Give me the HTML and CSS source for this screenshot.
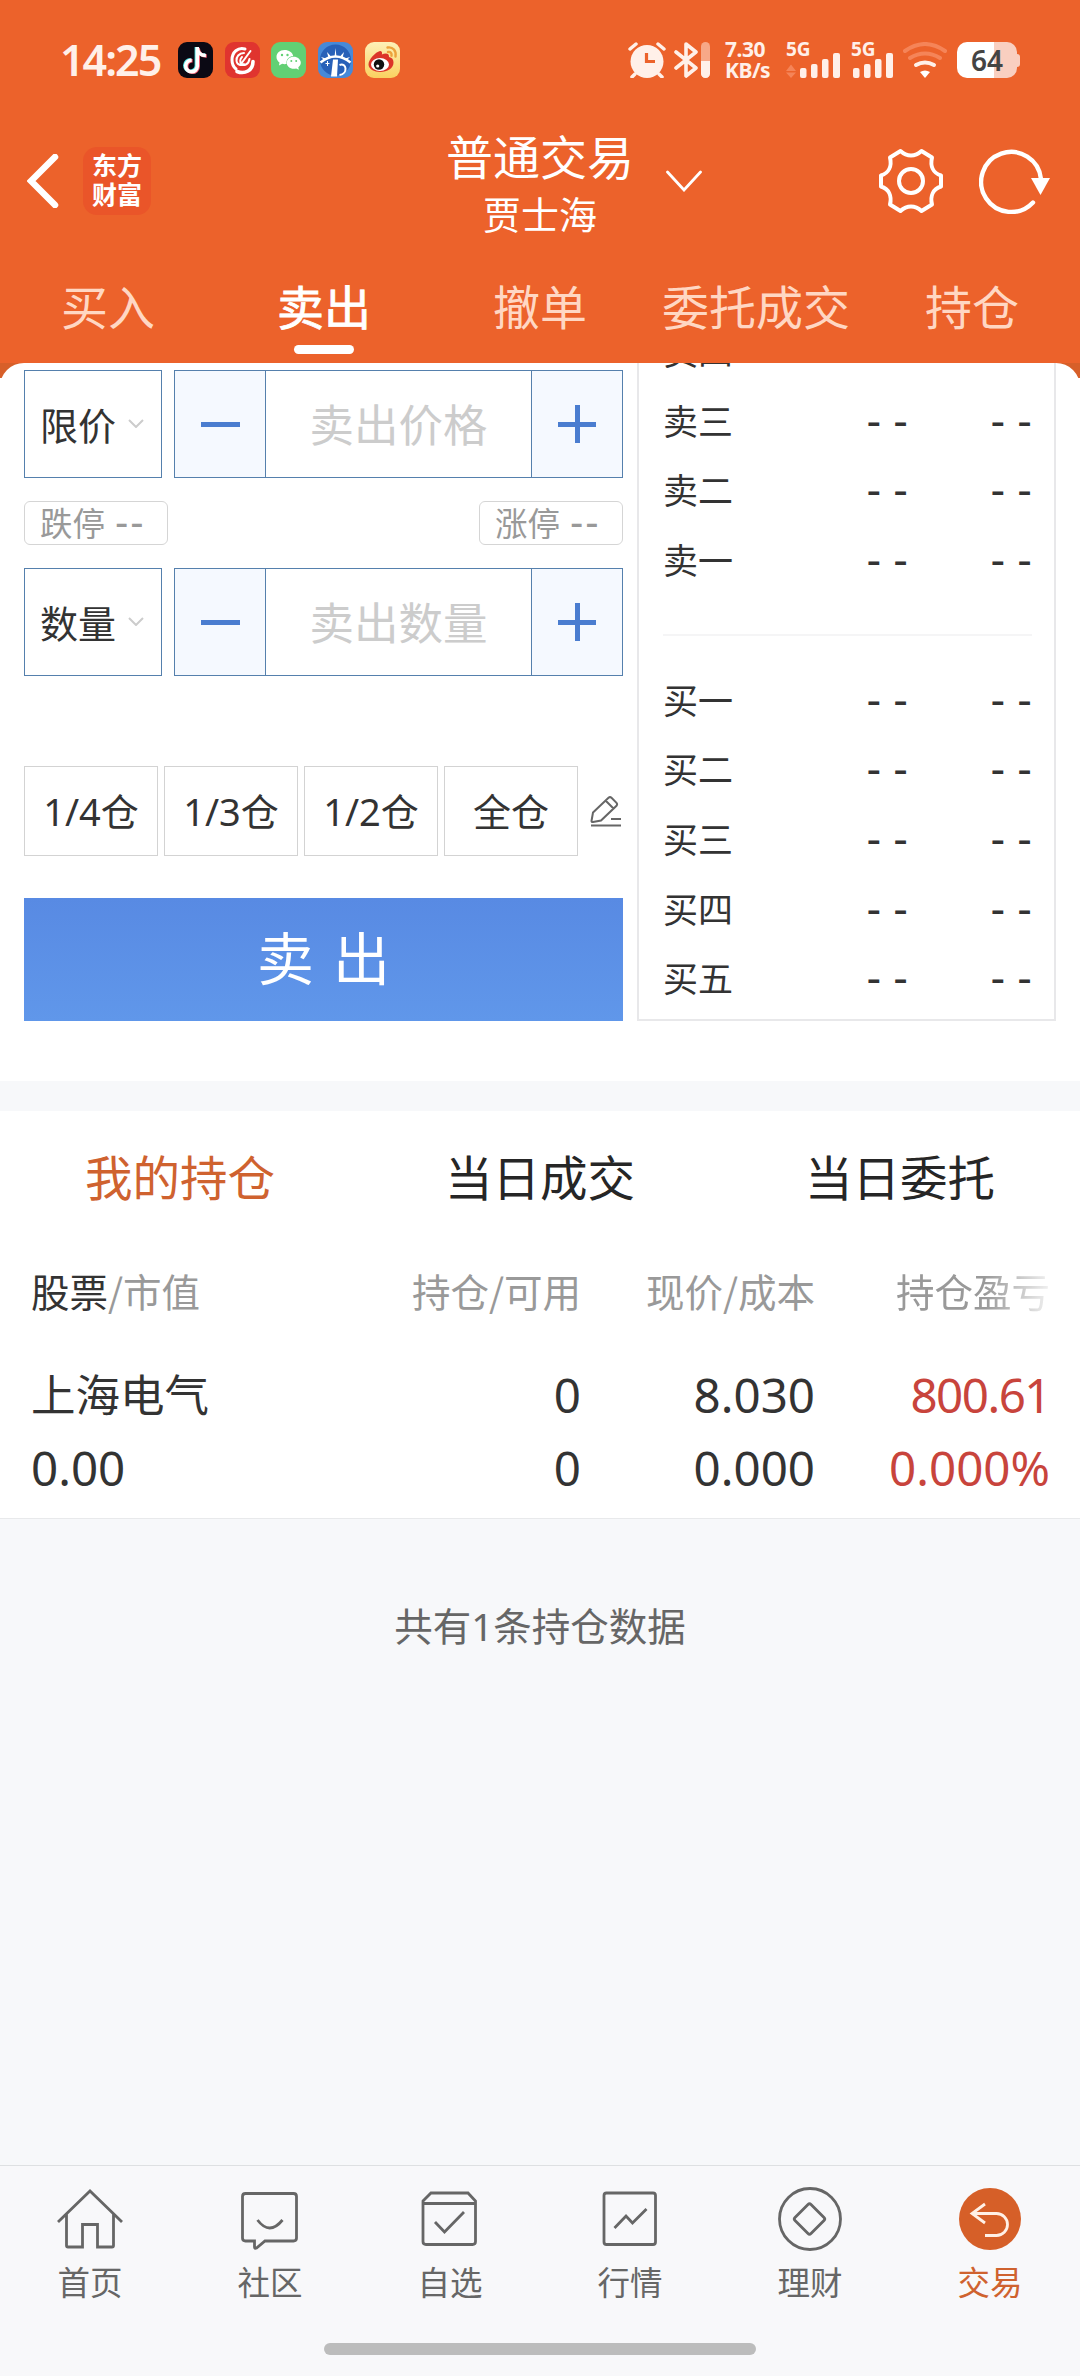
FILE: index.html
```html
<!DOCTYPE html>
<html lang="zh-CN">
<head>
  <meta charset="UTF-8">
  <meta name="viewport" content="width=device-width, initial-scale=1.0">
  <title>普通交易</title>
  <link rel="stylesheet" href="styles.css">
</head>
<body>

  <header class="header">
    <div class="statusbar">
      <span class="time">14:25</span>
      <div class="apps">
        <svg viewBox="0 0 35 36"><rect width="35" height="36" rx="9" fill="#0b0914"/><g fill="none" stroke-width="3.6"><path d="M18.4 5v18.5a5.8 5.8 0 1 1-5.6-5.8M18.4 6c.8 4.500 4 7 8.600 7" stroke="#4fe3e3"/><path d="M20.200 6v18.500a5.800 5.800 0 1 1-5.600-5.800M20.200 7c.8 4.500 4 7 8.600 7" stroke="#f0546c"/><path d="M19.300 5v19a5.800 5.800 0 1 1-5.600-5.800M19.300 6.500c.8 4.500 4 7 8.600 7" stroke="#fff"/></g></svg>
        <svg viewBox="0 0 35 36"><rect width="35" height="36" rx="9" fill="#e0342f"/><g fill="none" stroke="#fff" stroke-linecap="round"><path d="M20 7C13 5 7 10 7 18c0 4 1.500 7 4 9" stroke-width="3"/><path d="M12 29.500c8 3 16-1 16-10" stroke-width="3.600"/><path d="M19 11c-5 0-8 4-7.500 8s5 5 7.500 3M17 15c-2 2-2.500 5-.5 7s7 1 8-5M25.500 9 16 22" stroke-width="2"/></g></svg>
        <svg viewBox="0 0 35 36"><rect width="35" height="36" rx="9" fill="#62d074"/><path d="M13.500 8C8.800 8 5.500 11 5.500 15c0 2.300 1.200 4.200 3 5.500L8 23.500l3.200-1.700c1.500.4 3 .4 4.300.2-.7-4.500 2.600-7.800 6.700-8C21.500 10.500 18 8 13.500 8z" fill="#fff"/><path d="M22.700 14.800c-4 0-7 2.700-7 6s3 6 7 6c.9 0 1.700-.1 2.500-.4l2.600 1.400-.5-2.500c1.500-1.100 2.500-2.700 2.500-4.500 0-3.300-3.200-6-7.100-6z" fill="#fff"/><g fill="#62d074"><circle cx="11" cy="13" r="1.200"/><circle cx="16.500" cy="13" r="1.200"/><circle cx="20.300" cy="19" r="1"/><circle cx="25.200" cy="19" r="1"/></g></svg>
        <svg viewBox="0 0 35 36"><rect width="35" height="36" rx="9" fill="#4789d8"/><circle cx="17.500" cy="18" r="15.500" fill="#2860b8"/><path d="M2.500 20.500Q17.500 8.500 32.500 20.500" fill="none" stroke="#fff" stroke-width="2.400"/><path d="m16.500 15 1-9 1 9M10.500 16 9 10l4.500 5M24.500 16 26 10l-4.500 5M6 18l-3-3 5 1.500M29 18l3-3-5 1.500M15 17.500h5l-1 17h-6z" fill="#fff"/><path d="M21.500 23c7-3 9 8.500 0 10" fill="none" stroke="#fff" stroke-width="2"/><path d="M9.500 19v5M7.500 21.500h4" stroke="#fff"/></svg>
        <svg viewBox="0 0 35 36"><defs><linearGradient id="weibo" x2="0" y2="1"><stop stop-color="#fdf0b8"/><stop offset="1" stop-color="#fad160"/></linearGradient></defs><rect width="35" height="36" rx="9" fill="url(#weibo)"/><path d="M3.500 22.500c0-5 7-12.500 11.500-13.500 2 0 2.500 2 1.800 3.500 3-1.500 7.700-2 7.200 2.500 3 .5 4.500 2.500 4.500 5.500 0 6-6.500 9.500-13 9.500S3.500 27 3.500 22.500z" fill="#dc3429"/><ellipse cx="15" cy="22.500" rx="9" ry="6.500" fill="#fff"/><circle cx="14" cy="22.500" r="5.200" fill="#111"/><circle cx="12.700" cy="24" r="1.600" fill="#fff"/><path d="M22.500 5.500c5.500-1 9 3.500 8 9M23 10c2.500-.5 4 1.300 3.500 3.700" fill="none" stroke="#eca23c" stroke-width="2.400" stroke-linecap="round"/></svg>
      </div>
      <div class="signals">
        <svg class="alarm" viewBox="0 0 38 36"><circle cx="19" cy="19.500" r="16.500" fill="#fff0e9"/><path d="m2 7 6-5M30 2l6 5M7 32l-3 3M31 32l3 3" stroke="#fff0e9" stroke-width="3.500" stroke-linecap="round"/><path d="M18.500 11v8.500H27" fill="none" stroke="#ec622b" stroke-width="3.200"/></svg>
        <svg class="bluetooth" viewBox="0 0 36 36"><path d="m2 10 20 16-10 8V2l10 8L2 26" fill="none" stroke="#fff0e9" stroke-width="3.600" stroke-linejoin="round" stroke-linecap="round"/><rect x="27" width="9" height="36" rx="4.500" fill="#f7a888"/><path d="M27 19h9v12.500a4.500 4.500 0 0 1-9 0z" fill="#fff0e9"/></svg>
        <div class="netspeed"><span>7.30</span><span>KB/s</span></div>
        <div class="cell cell-data">
          <span>5G</span>
          <svg viewBox="0 0 55 36"><path d="m0 29 5-6.500 5 6.500zM0 30.500h10L5 36z" fill="#f58458"/><g fill="#fff0e9"><rect x="14" y="26" width="6.500" height="10" rx="2"/><rect x="25" y="22" width="6.500" height="14" rx="2"/><rect x="36" y="17" width="6.500" height="19" rx="2"/><rect x="47" y="11" width="7" height="25" rx="2"/></g></svg>
        </div>
        <div class="cell">
          <span>5G</span>
          <svg viewBox="0 0 42 36"><g fill="#fff0e9"><rect x="2" y="26" width="6.500" height="10" rx="2"/><rect x="13" y="22" width="6.500" height="14" rx="2"/><rect x="24" y="17" width="6.500" height="19" rx="2"/><rect x="35" y="11" width="7" height="25" rx="2"/></g></svg>
        </div>
        <svg class="wifi" viewBox="0 0 44 36"><g fill="none" stroke-width="4" stroke-linecap="round"><path d="M2 9q20-14 40 0M7 16q15-9 30 0" stroke="#f58458"/><path d="M13 23q9-5 18 0" stroke="#fff0e9"/></g><path d="M17 30q5-3 10 0l-5 6z" fill="#fff"/></svg>
        <div class="battery">64</div>
      </div>
    </div>

    <div class="navbar">
      <div class="nav-left">
        <svg class="back" viewBox="0 0 32 54"><path d="M28 3 4 27l24 24" fill="none" stroke="#fff" stroke-width="6.500" stroke-linecap="round"/></svg>
        <div class="logo">东方<br>财富</div>
      </div>
      <div class="nav-title">
        <h1>普通交易</h1>
        <p>贾士海</p>
      </div>
      <div class="nav-right">
        <svg class="arrow" viewBox="0 0 36 22"><path d="m1.500 2 16.500 18L34.500 2" fill="none" stroke="#fff" stroke-width="2.800" stroke-linecap="round"/></svg>
        <svg class="gear" viewBox="0 0 66 66"><g fill="none" stroke="#fff" stroke-width="4" stroke-linejoin="round"><path d="M22.500 3C29 9 37 9 43.500 3L54 9.500C52 18 55 25 63 27.500V38.500C55 41 52 48 54 56.500L43.500 63C37 57 29 57 22.500 63L12 56.500C14 48 11 41 3 38.500V27.500C11 25 14 18 12 9.500z"/><circle cx="33" cy="33" r="12"/></g></svg>
        <svg class="refresh" viewBox="0 0 72 66"><path d="M54 54.500A30 30 0 1 1 62 31" fill="none" stroke="#fff" stroke-width="4.400" stroke-linecap="round"/><path d="M52 30h19L61.500 47z" fill="#fff"/></svg>
      </div>
    </div>

    <nav class="tabs">
      <span>买入</span>
      <span class="active">卖出</span>
      <span>撤单</span>
      <span>委托成交</span>
      <span>持仓</span>
    </nav>
  </header>

  <div class="sheet">
    <section class="trade">
      <div class="form">
        <div class="field">
          <div class="select">限价<svg viewBox="0 0 16 9"><path d="m1 1 7 7 7-7" fill="none" stroke="#ccc" stroke-width="2"/></svg></div>
          <div class="stepper">
            <span class="step minus"></span>
            <span class="value">卖出价格</span>
            <span class="step plus"></span>
          </div>
        </div>
        <div class="limits">
          <span>跌停<i>--</i></span>
          <span>涨停<i>--</i></span>
        </div>
        <div class="field">
          <div class="select">数量<svg viewBox="0 0 16 9"><path d="m1 1 7 7 7-7" fill="none" stroke="#ccc" stroke-width="2"/></svg></div>
          <div class="stepper">
            <span class="step minus"></span>
            <span class="value">卖出数量</span>
            <span class="step plus"></span>
          </div>
        </div>
        <div class="ratios">
          <span class="ratio">1/4仓</span>
          <span class="ratio">1/3仓</span>
          <span class="ratio">1/2仓</span>
          <span class="ratio">全仓</span>
          <svg class="edit" viewBox="0 0 31 31"><path d="M1 29.500h30M21 23h10M1.500 25 3 16.500 18.500 1.800q1.500-1.300 3 0l5 5q1.200 1.500 0 3L11 24.500 3 26q-1.500.2-1.500-1zM16 5l8 8" fill="none" stroke="#666" stroke-width="2"/></svg>
        </div>
        <div class="sell">卖 出</div>
      </div>

      <div class="book">
        <div class="quote"><span>卖四</span><i>- -</i><i>- -</i></div>
        <div class="quote"><span>卖三</span><i>- -</i><i>- -</i></div>
        <div class="quote"><span>卖二</span><i>- -</i><i>- -</i></div>
        <div class="quote"><span>卖一</span><i>- -</i><i>- -</i></div>
        <div class="divider"></div>
        <div class="quote"><span>买一</span><i>- -</i><i>- -</i></div>
        <div class="quote"><span>买二</span><i>- -</i><i>- -</i></div>
        <div class="quote"><span>买三</span><i>- -</i><i>- -</i></div>
        <div class="quote"><span>买四</span><i>- -</i><i>- -</i></div>
        <div class="quote"><span>买五</span><i>- -</i><i>- -</i></div>
      </div>
    </section>
  </div>

  <section class="holdings">
    <div class="subtabs">
      <span class="active">我的持仓</span>
      <span>当日成交</span>
      <span>当日委托</span>
    </div>
    <div class="row head">
      <span><b>股票</b>/市值</span>
      <span>持仓/可用</span>
      <span>现价/成本</span>
      <span class="fade">持仓盈亏</span>
    </div>
    <div class="row">
      <span class="stock">上海电气</span>
      <span>0</span>
      <span>8.030</span>
      <span class="up profit">800.61</span>
    </div>
    <div class="row">
      <span>0.00</span>
      <span>0</span>
      <span>0.000</span>
      <span class="up">0.000%</span>
    </div>
  </section>

  <p class="summary">共有1条持仓数据</p>

  <footer class="footer">
    <nav class="tabbar">
      <div class="tab">
        <svg viewBox="0 0 66 66"><path d="M1 36 33 5l32 31M9.500 28v31.500q0 1.500 1.500 1.500h14.500V38.500h15V61H55q1.500 0 1.500-1.500V28"/></svg>
        <span>首页</span>
      </div>
      <div class="tab">
        <svg viewBox="0 0 66 66"><path d="M8.500 7.500h48q3 0 3 3V52q0 3-3 3H28l-8.500 7q-2 1-2-1v-6h-9q-3 0-3-3V10.500q0-3 3-3z"/><path d="M20.500 34q12 16 25 0"/></svg>
        <span>社区</span>
      </div>
      <div class="tab">
        <svg viewBox="0 0 66 66"><path d="M6 17.500h52.500M6 15l8-8h37l7.500 8v40.500q0 3-3 3H9q-3 0-3-3zM18 36l9.500 10L47 26"/></svg>
        <span>自选</span>
      </div>
      <div class="tab">
        <svg viewBox="0 0 66 66"><rect x="7" y="7" width="51.500" height="51.500" rx="2.500"/><path d="M17.500 42 29 30l6.500 7 14-14"/></svg>
        <span>行情</span>
      </div>
      <div class="tab">
        <svg viewBox="0 0 66 66"><circle cx="33" cy="33" r="30.500"/><path d="m31 18.500-13 13q-1.500 1.500 0 3l13 13q1.500 1.500 3 0l13-13q1.500-1.500 0-3l-13-13q-1.500-1.500-3 0z"/></svg>
        <span>理财</span>
      </div>
      <div class="tab active">
        <svg viewBox="0 0 66 66"><circle class="disc" cx="33" cy="33" r="31"/><path class="back-arrow" d="M28 18 15 27.500 28 37M15 27.500h24.500a11 11 0 0 1 0 22H28"/></svg>
        <span>交易</span>
      </div>
    </nav>
    <div class="gesture"></div>
  </footer>

</body>
</html>
```

FILE: styles.css
```css
* {
  box-sizing: border-box;
}
body {
  margin: 0;
  width: 1080px;
  height: 2376px;
  display: flex;
  flex-direction: column;
  overflow: hidden;
  background-color: #f7f8fa;
  color: #333;
  font-family: "Noto Sans", "Noto Sans CJK SC", sans-serif;
}
h1, p {
  margin: 0;
  font-weight: normal;
}
i {
  font-style: normal;
  font-family: "Liberation Sans", sans-serif;
}
svg {
  display: block;
  flex-shrink: 0;
}

/* header */
.header {
  height: 363px;
  background-color: #ec622b;
  color: #fff;
}
.statusbar {
  height: 120px;
  padding: 0 63px 0 60px;
  display: flex;
  align-items: center;
  color: #fff0e9;
}
.time {
  width: 118px;
  font-size: 43px;
  font-weight: 600;
  letter-spacing: -2px;
  line-height: 60px;
}
.apps {
  display: flex;
  gap: 11.7px;
}
.apps svg {
  width: 35px;
  height: 36px;
}
.signals {
  display: flex;
  margin-left: auto;
  height: 36px;
}
.alarm {
  width: 38px;
}
.bluetooth {
  width: 36px;
  margin-left: 8px;
}
.netspeed {
  display: flex;
  flex-direction: column;
  width: 46px;
  margin-left: 15px;
  font-size: 21px;
  font-weight: 700;
  line-height: 21px;
  letter-spacing: -0.5px;
  margin-top: -3px;
}
.cell {
  position: relative;
  width: 42px;
  margin-left: 10px;
}
.cell-data {
  width: 55px;
  margin-left: 15px;
}
.cell span {
  position: absolute;
  left: 0;
  top: -3px;
  font-size: 19px;
  font-weight: 700;
  line-height: 20px;
}
.wifi {
  width: 44px;
  margin-left: 10px;
}
.battery {
  position: relative;
  width: 60px;
  height: 36px;
  margin-left: 10px;
  border-radius: 10px;
  background: linear-gradient(90deg, #fff 37px, #f9cfc0 37px);
  color: #444;
  font-size: 28px;
  font-weight: 600;
  line-height: 36px;
  text-align: center;
}
.battery::after {
  content: "";
  position: absolute;
  right: -3px;
  top: 12px;
  width: 3px;
  height: 13px;
  border-radius: 0 3px 3px 0;
  background-color: #f9cfc0;
}
.navbar {
  height: 122px;
  display: grid;
  grid-template-columns: 1fr auto 1fr;
  grid-template-rows: 122px;
}
.nav-left, .nav-right {
  display: flex;
  align-items: center;
}
.nav-left {
  padding-left: 27px;
  gap: 24px;
}
.back {
  width: 32px;
  height: 54px;
}
.logo {
  width: 68px;
  height: 68px;
  padding-top: 4px;
  border-radius: 14px;
  background-color: #ea5529;
  font-size: 25px;
  font-weight: 700;
  line-height: 29px;
  text-align: center;
}
.nav-title {
  text-align: center;
}
.nav-title h1 {
  padding-top: 11px;
  font-size: 47px;
  line-height: 52px;
}
.nav-title p {
  font-size: 38px;
  line-height: 63px;
}
.nav-right {
  padding-right: 29px;
}
.arrow {
  width: 36px;
  height: 22px;
  margin-left: 32px;
  margin-right: auto;
}
.gear {
  width: 66px;
  height: 66px;
}
.refresh {
  width: 72px;
  height: 66px;
  margin-left: 35px;
}
.tabs {
  display: flex;
  padding-top: 35px;
}
.tabs span {
  flex: 1;
  color: #ffd7c3;
  font-size: 47px;
  line-height: 60px;
  text-align: center;
  white-space: nowrap;
}
.tabs .active {
  color: #fff;
  -webkit-text-stroke: 0.8px #fff;
}
.tabs .active::after {
  content: "";
  display: block;
  width: 60px;
  height: 9px;
  margin: 8px auto 0;
  border-radius: 5px;
  background-color: #fff;
}

/* order form and quotes */
.sheet {
  background: linear-gradient(#d75f29 15px, #fff 15px);
}
.trade {
  display: flex;
  justify-content: space-between;
  height: 718px;
  padding: 0 24px;
  border-radius: 24px 24px 0 0;
  background-color: #fff;
  overflow: hidden;
}
.form {
  width: 599px;
  padding-top: 7px;
}
.field {
  display: flex;
  gap: 12px;
  height: 108px;
}
.select {
  width: 138px;
  padding: 0 17px 2px 15px;
  display: flex;
  align-items: center;
  justify-content: space-between;
  border: 1px solid #5580ad;
  font-size: 38px;
}
.select svg {
  width: 16px;
  height: 9px;
}
.stepper {
  flex: 1;
  display: flex;
  border: 1px solid #5580ad;
}
.step {
  display: flex;
  width: 91px;
  background-color: #f5f9ff;
  background-repeat: no-repeat;
  background-position: center;
}
.minus {
  border-right: 1px solid #5580ad;
  background-image: linear-gradient(#4a7dd0, #4a7dd0);
  background-size: 39px 5px;
}
.plus {
  border-left: 1px solid #5580ad;
  background-image: linear-gradient(#4a7dd0, #4a7dd0), linear-gradient(#4a7dd0, #4a7dd0);
  background-size: 38px 5px, 5px 38px;
}
.value {
  flex: 1;
  color: #ccc;
  font-size: 44.5px;
  line-height: 108px;
  text-align: center;
}
.limits {
  display: flex;
  justify-content: space-between;
  height: 90px;
  padding: 23px 0;
}
.limits span {
  width: 144px;
  padding-left: 15px;
  border: 1px solid #d5d5d5;
  border-radius: 6px;
  color: #999;
  font-size: 32.5px;
  line-height: 44px;
  white-space: nowrap;
}
.limits i {
  margin-left: 10px;
  font-size: 40px;
  letter-spacing: 2px;
  line-height: 1;
}
.ratios {
  display: flex;
  align-items: center;
  gap: 6px;
  margin-top: 90px;
}
.ratio {
  width: 134px;
  height: 90px;
  border: 1px solid #d3d3d3;
  font-size: 38px;
  line-height: 88px;
  text-align: center;
}
.edit {
  width: 31px;
  height: 31px;
  margin-left: 6px;
}
.sell {
  height: 123px;
  margin-top: 42px;
  background: linear-gradient(#588ae3, #6097ea);
  color: #fff;
  font-size: 57px;
  line-height: 121px;
  text-align: center;
  word-spacing: 4px;
}
.book {
  width: 419px;
  height: 658px;
  padding: 0 22px 0 24px;
  border: 2px solid #e8e8ea;
  border-top: none;
  overflow: hidden;
}
.quote {
  display: flex;
  align-items: center;
  height: 69.7px;
  font-size: 35px;
}
.quote:first-child {
  margin-top: -47px;
}
.quote span {
  flex: 1;
  padding-bottom: 3px;
}
.quote i {
  width: 124px;
  font-size: 44px;
  text-align: right;
}
.divider {
  height: 2px;
  margin: 39px 0 29px;
  background-color: #f5f5f6;
}

/* holdings */
.holdings {
  height: 408px;
  margin-top: 30px;
  border-bottom: 1px solid #e8e9eb;
  background-color: #fff;
}
.subtabs {
  display: flex;
  height: 134px;
}
.subtabs span {
  flex: 1;
  color: #262626;
  font-size: 47.5px;
  line-height: 134px;
  text-align: center;
}
.subtabs .active {
  color: #cf622f;
}
.row {
  display: grid;
  grid-template-columns: 300px 250px 234px 235px;
  padding: 0 30px 0 31px;
  font-size: 47.5px;
  line-height: 73px;
  text-align: right;
}
.row span:first-child {
  text-align: left;
}
.row .stock {
  font-size: 44.5px;
}
.row .up {
  color: #c8443c;
}
.row .profit {
  letter-spacing: -1.5px;
}
.head {
  height: 113px;
  color: #999;
  font-family: "Noto Sans CJK SC", sans-serif;
  font-size: 38.5px;
  line-height: 90px;
}
.head b {
  color: #333;
  font-weight: normal;
}
.fade {
  -webkit-mask-image: linear-gradient(90deg, #000 170px, transparent 245px);
  mask-image: linear-gradient(90deg, #000 170px, transparent 245px);
}
.summary {
  padding-top: 77px;
  color: #666;
  font-size: 38.5px;
  line-height: 60px;
  text-align: center;
}

/* bottom bar */
.footer {
  height: 211px;
  margin-top: auto;
  padding-top: 20px;
  border-top: 1px solid #dee0e2;
  background-color: #f8f8fa;
}
.tabbar {
  display: flex;
}
.tab {
  flex: 1;
  display: flex;
  flex-direction: column;
  align-items: center;
  color: #666;
  font-size: 32.5px;
  line-height: 62px;
}
.tab svg {
  width: 66px;
  height: 66px;
  fill: none;
  stroke: #666;
  stroke-width: 2.8;
}
.tab.active {
  color: #cf622f;
}
.tab .disc {
  fill: #d65f28;
  stroke: none;
}
.tab .back-arrow {
  stroke: #fff0e6;
}
.gesture {
  width: 432px;
  height: 12px;
  margin: 29px auto 0;
  border-radius: 6px;
  background-color: #bcbcbc;
}
```
